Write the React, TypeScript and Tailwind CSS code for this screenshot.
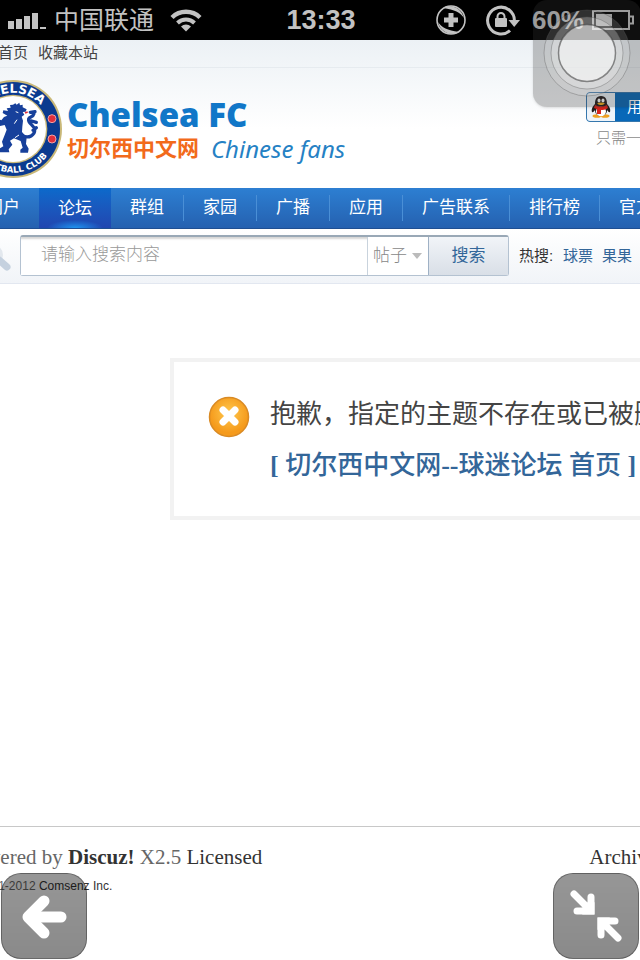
import React from "react";

const navItems = ["门户", "论坛", "群组", "家园", "广播", "应用", "广告联系", "排行榜", "官方微博"];
const hotWords = ["球票", "果果"];

const StatusBar: React.FC = () => (
  <header className="grid h-10 grid-cols-[1fr_auto_1fr] items-center bg-black pr-[6px] pl-2 font-['Liberation_Sans','Noto_Sans_CJK_SC',sans-serif] text-[26px] leading-10 text-[#c2c2c2]">
    <div className="flex items-center">
      <svg width="38" height="18" viewBox="0 0 38 18" fill="currentColor">
        <path d="M0 10h6v8H0zM8 8h6v10H8zM16 5h6v13h-6zM24 2h6v16h-6zM32 16h6v2h-6z" />
      </svg>
      <span className="ml-2 text-[25px]">中国联通</span>
      <svg className="ml-4" width="32" height="24" viewBox="0 0 32 24" fill="none" stroke="currentColor">
        <path d="M2 9.5a20 20 0 0 1 28 0" strokeWidth="4.4" />
        <path d="M7.5 15a12.3 12.3 0 0 1 17 0" strokeWidth="4" />
        <path d="M16 23.5l-5-5a7.2 7.2 0 0 1 10 0z" fill="currentColor" stroke="none" />
      </svg>
    </div>
    <span className="text-[27px] font-bold">13:33</span>
    <div className="flex items-center justify-end">
      <svg width="30" height="32" viewBox="0 0 30 32" fill="none" stroke="currentColor">
        <circle cx="15" cy="16" r="14" strokeWidth="1.6" />
        <path d="M15 9v14M8 16h14" strokeWidth="5" />
        <path d="M7 4C13 0 25 2 28 14c-4-6-9-8-21-10zM23 28C17 32 5 30 2 18c4 6 9 8 21 10z" fill="currentColor" stroke="none" />
      </svg>
      <svg className="ml-5" width="34" height="32" viewBox="0 0 34 32" fill="none" stroke="currentColor">
        <path d="M24 26.5A13.4 13.4 0 1 1 28.4 17" strokeWidth="3" />
        <path d="M22.5 16H34l-5.8 7z" fill="currentColor" stroke="none" />
        <rect x="9" y="14" width="12" height="9" rx="1" fill="currentColor" stroke="none" />
        <path d="M11.5 15v-2.500a3.500 3.500 0 0 1 7 0V15" strokeWidth="2" />
      </svg>
      <span className="ml-3 font-bold">60%</span>
      <svg className="ml-2" width="42" height="20" viewBox="0 0 42 20" fill="none" stroke="currentColor" strokeWidth="2">
        <path d="M1 1h36v18H1zM37 6.500h4v7h-4" />
        <path d="M4 4h16v12H4z" fill="currentColor" stroke="none" />
      </svg>
    </div>
  </header>
);

const Crest: React.FC = () => (
  <svg className="shrink-0" width="100" height="100" viewBox="-150 -150 300 300">
    <defs>
      <path id="arcTop" d="M-109 0A109 109 0 0 1 109 0" />
      <path id="arcBottom" d="M-131 0A131 131 0 0 0 131 0" />
    </defs>
    <circle r="147" fill="#c9b878" />
    <circle r="141" fill="#0b3a8f" />
    <circle r="103" fill="#c9b878" />
    <circle r="99" fill="#fff" />
    <g fill="#fff" fontFamily="DejaVu Sans" fontWeight="bold" textAnchor="middle">
      <text fontSize="37">
        <textPath href="#arcTop" startOffset="50%">CHELSEA</textPath>
      </text>
      <text fontSize="26">
        <textPath href="#arcBottom" startOffset="50%">FOOTBALL CLUB</textPath>
      </text>
    </g>
    <g fill="#e0303c" stroke="#f4a0a4" strokeWidth="3">
      <circle cx="117" cy="-31" r="12" />
      <circle cx="117" cy="30" r="12" />
      <circle cx="-117" cy="-31" r="12" />
      <circle cx="-117" cy="30" r="12" />
    </g>
    <g fill="#17409b">
      <path d="M0-73l7-4 4 4 8-6 2 8 8-2 0 8 12 6-3 7-9 1 5 8-8 6 4 12-2 18 -1 16 14 16-2 20 8 14-2 12H22l0-9 7-6-6-20-20-8-12 7 7 12-11 14 2 9h-32l0-10 14-8-4-14 8-20 6-16-6-14-18 4-14-8-14 6-8-8 8-6-4-8 10-2 8 6 12-2 10 4 8-10 10-4-14-8 2-8 14 2-4-8 12-2-2-8z" />
      <path d="M28 20C48 30 66 18 65 2C64-12 44-16 47-30C49-38 60-34 63-46M52-50L66-52M56-24L70-20M60 4L70-4" fill="none" stroke="#17409b" strokeWidth="10" strokeLinecap="round" />
      <path d="M-70-40V70M-82 60l24 8" stroke="#17409b" strokeWidth="7" />
    </g>
    <path d="M8-52l8 3M12-28l-8 12M18 18L6 26M-6 36l12 8" stroke="#fff" strokeWidth="3" />
    <path d="M36-48l8-3" stroke="#e0303c" strokeWidth="5" />
  </svg>
);

const Penguin: React.FC = () => (
  <svg width="20" height="22" viewBox="0 0 20 22">
    <ellipse cx="6" cy="20" rx="4.500" ry="1.800" fill="#f0a020" />
    <ellipse cx="14" cy="20" rx="4.500" ry="1.800" fill="#f0a020" />
    <path d="M10 0C5 0 4 4 4 8C2 10 0 13 1 16c1 1 2-1 3-2c0 4 3 6 6 6s6-2 6-6c1 1 2 3 3 2c1-3-1-6-3-8C16 4 15 0 10 0z" fill="#241c1c" />
    <ellipse cx="10" cy="15.500" rx="5" ry="4.800" fill="#fff" />
    <path d="M4 9c4 2 8 2 12 0l1 3c-3 2-5 2-7 2v4H6v-5l-3-1z" fill="#d8251d" />
    <ellipse cx="8" cy="4.500" rx="1.500" ry="2" fill="#fff" />
    <ellipse cx="12" cy="4.500" rx="1.500" ry="2" fill="#fff" />
    <path d="M6 7.500c3-1.500 5-1.500 8 0c-3 2-5 2-8 0z" fill="#f5b01c" />
  </svg>
);

const SiteHeader: React.FC = () => (
  <div className="bg-linear-to-b from-[#ecf1f5] to-white to-60%">
    <div className="-ml-8 flex h-7 items-center gap-[10px] border-b border-[#e6ebef] text-[15px] text-[#444]">
      <a href="#home">设为首页</a>
      <a href="#favorite">收藏本站</a>
    </div>
    <div className="-mr-24 -ml-[37px] flex h-[120px] items-start justify-between pt-[11px]">
      <a href="#index" className="flex items-start">
        <Crest />
        <span className="mt-4 ml-1">
          <span className="block font-['Open_Sans',sans-serif] text-[33px] leading-10 font-extrabold text-[#1177c8]">
            Chelsea FC
          </span>
          <span className="flex items-center gap-3 leading-7">
            <span className="text-[22px] font-bold text-[#f26a1b]">切尔西中文网</span>
            <span className="font-['Noto_Sans',sans-serif] text-[24px] text-[#2581c4] italic">Chinese fans</span>
          </span>
        </span>
      </a>
      <div className="mt-[13px] w-[150px] shrink-0">
        <button className="flex h-[30px] w-full overflow-hidden rounded-sm border border-[#3577ad] bg-[#0868b8] text-[15px] text-white">
          <span className="flex h-full w-7 items-center justify-center bg-[#eef4fa]">
            <Penguin />
          </span>
          <span className="pl-3 leading-7">用QQ帐号登录</span>
        </button>
        <p className="mt-1 ml-[10px] text-[15px] leading-6 font-light whitespace-nowrap text-[#888]">只需一步，快速开始</p>
      </div>
    </div>
  </div>
);

const NavBar: React.FC = () => (
  <nav className="h-[41px] border-b border-[#1f4f92] bg-linear-to-b from-[#2d7fd2] to-[#2561b0]">
    <ul className="-ml-[33px] flex h-10 items-center text-[17px] whitespace-nowrap text-white">
      {navItems.map((item) =>
        item === "论坛" ? (
          <li key={item} className="h-full bg-linear-to-b from-[#0b6acb] to-[#2046b0]">
            <a href="#forum" className="block h-full bg-[radial-gradient(28px_8px_at_bottom,#1f95f0,transparent)] px-[19px] leading-[42px]">
              {item}
            </a>
          </li>
        ) : (
          <li key={item} className="border-r border-[#4a8fd6] first:border-r-0">
            <a href="#nav" className="block px-[19px] leading-[26px]">{item}</a>
          </li>
        )
      )}
    </ul>
  </nav>
);

const SearchBar: React.FC = () => (
  <form className="flex h-[55px] items-center border-b border-[#e2e7f0] bg-linear-to-b from-white to-[#f1f4f8] pr-2">
    <svg className="mt-3 shrink-0" width="20" height="30" viewBox="0 0 20 30" fill="none">
      <circle cx="-8" cy="8" r="9" stroke="#e3e8ee" strokeWidth="4" />
      <path d="M-1 13l8 7" stroke="#c5d1df" strokeWidth="7" strokeLinecap="round" />
    </svg>
    <div className="mb-px flex h-[41px] min-w-0 flex-1 rounded-[3px] border border-t-2 border-[#b4c2d1] border-t-[#99a8b6] bg-white">
      <input
        type="text"
        aria-label="搜索内容"
        placeholder="请输入搜索内容"
        className="min-w-0 flex-1 bg-white px-5 pb-[2px] text-[17px] font-light shadow-[inset_0_5px_2px_-3px_#d5d5d5] outline-none placeholder:text-[#999]"
      />
      <div className="relative w-[61px] border-l border-[#c9d3dd]">
        <select aria-label="搜索类型" className="h-full w-full appearance-none pb-px pl-[5px] text-[17px] font-light text-[#888] outline-none">
          <option>帖子</option>
          <option>用户</option>
        </select>
        <svg className="pointer-events-none absolute top-4 right-[6px]" width="10" height="6" viewBox="0 0 10 6">
          <path d="M0 0h10L5 6z" fill="#bbb" />
        </svg>
      </div>
      <button type="button" className="w-20 border-l border-[#9fb1c5] bg-linear-to-b from-[#f1f4f8] to-[#d9dfe7] text-[17px] text-[#336699]">
        搜索
      </button>
    </div>
    <div className="ml-[10px] flex gap-[9px] text-[15px] text-[#336699]">
      <span className="w-[35px] text-[#333]">热搜:</span>
      {hotWords.map((word) => (
        <a key={word} href="#hot">{word}</a>
      ))}
    </div>
  </form>
);

const ErrorMessage: React.FC = () => (
  <main className="flex-1 pt-[74px] pl-[170px]">
    <div className="-mr-1 flex h-[162px] gap-5 border-4 border-[#f2f2f2] pt-[26px] pl-[34px] whitespace-nowrap">
      <svg className="mt-2 shrink-0" width="42" height="42" viewBox="0 0 42 42">
        <defs>
          <radialGradient id="orange" cy="0.4">
            <stop offset="0" stopColor="#ffc94f" />
            <stop offset="1" stopColor="#f59a1b" />
          </radialGradient>
        </defs>
        <circle cx="21" cy="21" r="19.500" fill="url(#orange)" stroke="#d98a24" strokeWidth="1.500" />
        <path d="M15 14l12 12M27 14L15 26" stroke="#fff" strokeWidth="7" strokeLinecap="round" />
      </svg>
      <div className="text-[26px] leading-[52px]">
        <p className="text-[#444]">抱歉，指定的主题不存在或已被删除或正在被审核</p>
        <a href="#index" className="block font-['Liberation_Serif','Noto_Sans_CJK_SC',serif] font-medium text-[#336699]">
          <b>[</b> 切尔西中文网<b>--</b>球迷论坛 首页 <b>]</b>
        </a>
      </div>
    </div>
  </main>
);

const Footer: React.FC = () => (
  <footer className="h-[134px] border-t border-[#c8c8c8] pt-[17px] whitespace-nowrap">
    <div className="-mr-6 -ml-[37px] flex justify-between font-['Liberation_Serif',serif] text-[21px] leading-[26px] text-[#333]">
      <p>
        <span className="text-[#666]">Powered by </span>
        <a href="#discuz" className="font-bold">Discuz!</a>
        <span className="text-[#666]"> X2.5 </span>
        <a href="#license">Licensed</a>
      </p>
      <a href="#archiver">Archiver</a>
    </div>
    <p className="mt-[6px] -ml-[34px] font-['Liberation_Sans',sans-serif] text-[12px] leading-5 text-[#666]">
      © 2001-2012 <a href="#comsenz" className="text-[#333]">Comsenz Inc.</a>
    </p>
  </footer>
);

const AssistiveTouch: React.FC = () => (
  <button aria-label="AssistiveTouch" className="absolute top-0 -right-[1px] h-[107px] w-[108px] rounded-[14px] bg-[#363636]/28 shadow-sm">
    <svg width="108" height="107" viewBox="0 0 108 107" fill="#fff">
      <circle cx="54" cy="53" r="43" fillOpacity="0.14" stroke="#555" strokeOpacity="0.35" />
      <circle cx="54" cy="53" r="36" fillOpacity="0.25" stroke="#555" strokeOpacity="0.35" />
      <circle cx="54" cy="53" r="28.500" fillOpacity="0.5" stroke="#444" strokeOpacity="0.6" strokeWidth="1.500" />
    </svg>
  </button>
);

const FloatingButtons: React.FC = () => (
  <>
    <button aria-label="后退" className="absolute bottom-[1px] left-[1px] size-[86px] rounded-[20px] border border-black/30 bg-linear-to-b from-black/41 to-black/46">
      <svg width="84" height="84" viewBox="0 0 84 84" fill="none" stroke="#fff" strokeWidth="11" strokeLinecap="round" strokeLinejoin="round">
        <path d="M42 27L26 43l16 16" />
        <path d="M28 43h31" />
        <path d="M26 43l9-9v18z" fill="#fff" strokeWidth="8" />
      </svg>
    </button>
    <button aria-label="退出全屏" className="absolute right-[1px] bottom-[1px] size-[86px] rounded-[20px] border border-black/30 bg-linear-to-b from-black/41 to-black/46">
      <svg width="84" height="84" viewBox="0 0 84 84" fill="none" stroke="#fff" strokeWidth="7" strokeLinecap="round">
        <path d="M20 20l15 15M37 23v14H23" />
        <path d="M64 64L49 49M47 61V47h14" />
        <path d="M28 40.500h12.500V28zM43.500 56V43.500H56z" fill="#fff" stroke="none" />
      </svg>
    </button>
  </>
);

const App: React.FC = () => (
  <div className="relative flex min-h-screen flex-col overflow-hidden bg-white font-['Liberation_Sans','Noto_Sans_CJK_SC',sans-serif]">
    <StatusBar />
    <SiteHeader />
    <NavBar />
    <SearchBar />
    <ErrorMessage />
    <Footer />
    <AssistiveTouch />
    <FloatingButtons />
  </div>
);

export default App;
